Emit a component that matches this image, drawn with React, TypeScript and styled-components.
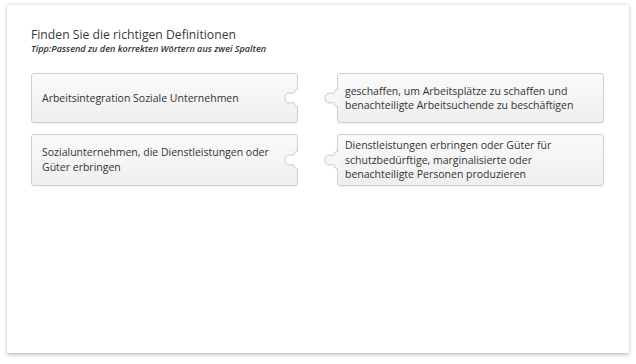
import React from 'react';
import styled, {createGlobalStyle} from 'styled-components';

const Global = createGlobalStyle`
  html, body { margin: 0; padding: 0; background: #fff; }
  body { font-family: "Open Sans", "Liberation Sans", sans-serif; }
`;

const Page = styled.div`
  padding: 4px 7px 11px 7px;
`;

const Card = styled.div`
  height: 349px;
  box-sizing: border-box;
  background: #fff;
  border-top: 1px solid #ececec;
  box-shadow: 0 2px 4px rgba(0, 0, 0, 0.22), 0 0 3px rgba(0, 0, 0, 0.08);
  padding: 21px 24px 0 24px;
`;

const Title = styled.h2`
  margin: 0;
  font-size: 12.2px;
  font-weight: 400;
  color: #3a3a3a;
  line-height: 17px;
`;

const Hint = styled.p`
  margin: 0;
  font-size: 9.1px;
  font-style: italic;
  font-weight: 600;
  color: #333;
  line-height: 12px;
`;

const Pairs = styled.div`
  display: grid;
  grid-template-columns: 267px 267px;
  column-gap: 39px;
  row-gap: 11px;
  margin-top: 18px;
`;

const Piece = styled.div<{ $side: 'left' | 'right' }>`
  position: relative;
  box-sizing: border-box;
  min-height: 50px;
  display: flex;
  align-items: center;
  padding: 3px 10px 3px ${p => (p.$side === 'right' ? '7px' : '10px')};
  background: linear-gradient(#fafafa, #efefef);
  border: 1px solid #cfcfcf;
  border-radius: 3px;
  box-shadow: 0 1px 1px rgba(0, 0, 0, 0.06);
  font-size: 10.5px;
  line-height: 14.5px;
  color: #333;
`;

const Notch = styled.svg`
  position: absolute;
  right: -1px;
  top: 50%;
  margin-top: -11px;
  width: 13px;
  height: 22px;
  overflow: visible;
`;

const Knob = styled.svg`
  position: absolute;
  left: -13px;
  top: 50%;
  margin-top: -11px;
  width: 14px;
  height: 22px;
  overflow: visible;
`;

const tabPath = 'M13 2 C10 2 9 5 9 6 C9 7 6 6 4 6 C1 6 0 9 0 11 C0 13 1 16 4 16 C6 16 9 15 9 16 C9 17 10 20 13 20';

const SocketShape = () => (
    <Notch viewBox="0 0 13 22">
        <path d={tabPath + ' L14 20 L14 2 Z'} fill="#fff" stroke="none" />
        <path d={tabPath} fill="none" stroke="#c9c9c9" strokeWidth="1" />
    </Notch>
);

const KnobShape = () => (
    <Knob viewBox="0 0 14 22">
        <path d={tabPath + ' L15 20 L15 2 Z'} fill="#f6f6f6" stroke="none" />
        <path d={tabPath} fill="none" stroke="#c9c9c9" strokeWidth="1" />
    </Knob>
);

const pairs: [string, string][] = [
    ['Arbeitsintegration Soziale Unternehmen', 'geschaffen, um Arbeitsplätze zu schaffen und benachteiligte Arbeitsuchende zu beschäftigen'],
    ['Sozialunternehmen, die Dienstleistungen oder Güter erbringen', 'Dienstleistungen erbringen oder Güter für schutzbedürftige, marginalisierte oder benachteiligte Personen produzieren'],
];

export default function App(): React.ReactElement {
    return <Page>
        <Global />
        <Card>
            <Title>Finden Sie die richtigen Definitionen</Title>
            <Hint>Tipp:Passend zu den korrekten Wörtern aus zwei Spalten</Hint>
            <Pairs>
                {pairs.map(([term, def]) => (
                    <React.Fragment key={term}>
                        <Piece $side="left">
                            {term}
                            <SocketShape />
                        </Piece>
                        <Piece $side="right">
                            <KnobShape />
                            {def}
                        </Piece>
                    </React.Fragment>
                ))}
            </Pairs>
        </Card>
    </Page>;
}
